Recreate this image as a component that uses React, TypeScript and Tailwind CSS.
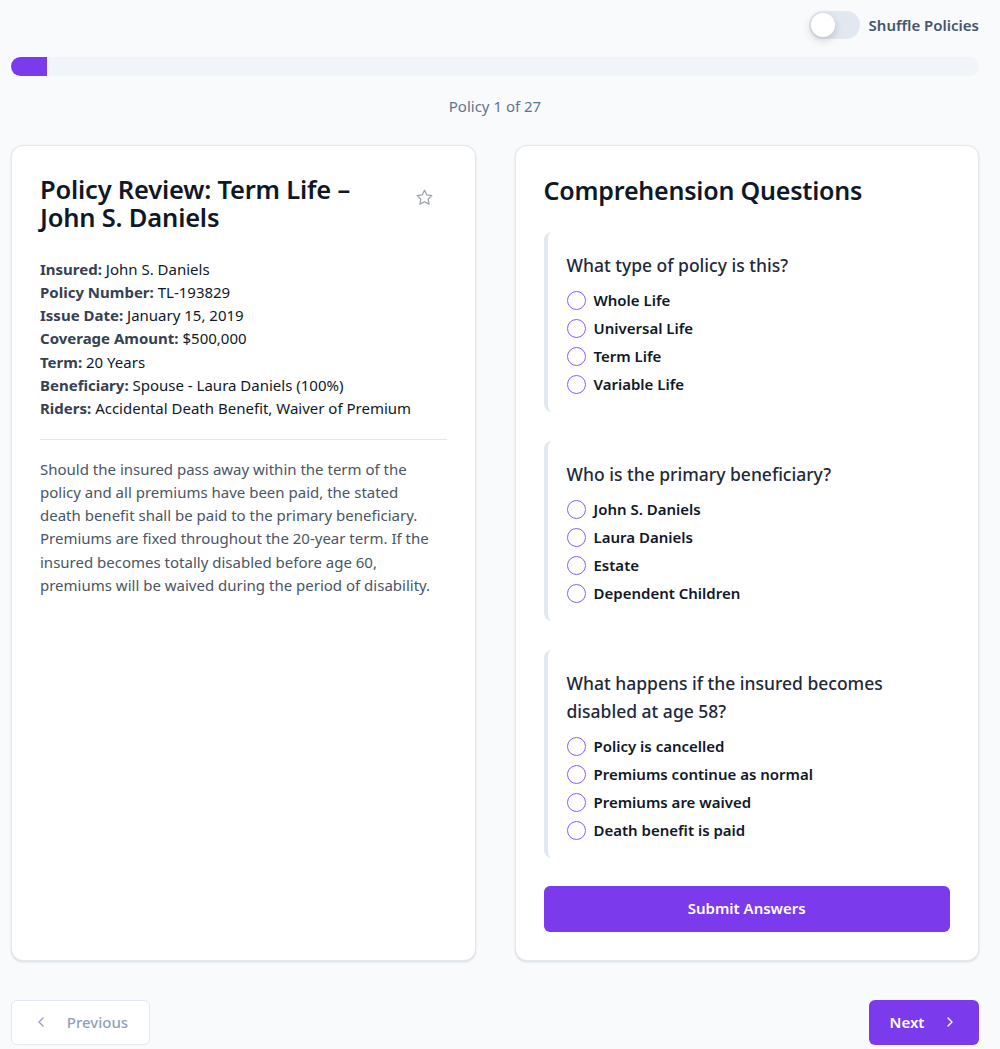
import { useState } from 'react';

const details = [
  ['Insured:', 'John S. Daniels'],
  ['Policy Number:', 'TL-193829'],
  ['Issue Date:', 'January 15, 2019'],
  ['Coverage Amount:', '$500,000'],
  ['Term:', '20 Years'],
  ['Beneficiary:', 'Spouse - Laura Daniels (100%)'],
  ['Riders:', 'Accidental Death Benefit, Waiver of Premium'],
];

const questions = [
  {
    q: 'What type of policy is this?',
    options: ['Whole Life', 'Universal Life', 'Term Life', 'Variable Life'],
  },
  {
    q: 'Who is the primary beneficiary?',
    options: ['John S. Daniels', 'Laura Daniels', 'Estate', 'Dependent Children'],
  },
  {
    q: 'What happens if the insured becomes disabled at age 58?',
    options: ['Policy is cancelled', 'Premiums continue as normal', 'Premiums are waived', 'Death benefit is paid'],
  },
];

function StarIcon() {
  return (
    <svg width="19" height="19" viewBox="0 0 24 24" fill="none" stroke="#9ca3af" strokeWidth="1.6" strokeLinejoin="round">
      <path d="M12 2.8l2.85 5.78 6.38.93-4.62 4.5 1.09 6.35L12 17.36l-5.7 3 1.09-6.35-4.62-4.5 6.38-.93z" />
    </svg>
  );
}

function Chevron({ dir }: { dir: 'left' | 'right' }) {
  return (
    <svg width="16" height="16" viewBox="0 0 24 24" fill="none" stroke="currentColor" strokeWidth="2" strokeLinecap="round" strokeLinejoin="round">
      {dir === 'left' ? <path d="M15 18l-6-6 6-6" /> : <path d="M9 18l6-6-6-6" />}
    </svg>
  );
}

export default function App() {
  const [shuffle, setShuffle] = useState(false);
  const [answers, setAnswers] = useState<Record<number, string>>({});

  return (
    <div className="min-h-screen bg-[#f8fafc] pl-[11px] pr-[21px] pt-[11px] pb-1 text-gray-900 [font-family:'Segoe_UI','Noto_Sans',sans-serif]">
      {/* 상단 토글 */}
      <div className="flex items-center justify-end gap-[9px]">
        <button
          onClick={() => setShuffle(!shuffle)}
          className={`relative h-7 w-[51px] rounded-full ${shuffle ? 'bg-[#7c3aed]' : 'bg-slate-200'}`}
        >
          <span
            className={`absolute top-[2px] h-6 w-6 rounded-full bg-white shadow-[0_3px_8px_rgba(0,0,0,0.18)] ${shuffle ? 'left-[25px]' : 'left-[2px]'}`}
          />
        </button>
        <span className="text-[15px] font-semibold text-slate-600">Shuffle Policies</span>
      </div>

      {/* 진행 바 */}
      <div className="mt-[18px] h-[19px] w-full overflow-hidden rounded-full bg-slate-100">
        <div className="h-full w-[36px] bg-[#7c3aed]" />
      </div>

      <div className="mt-[19px] text-center text-[15px] text-slate-500">Policy 1 of 27</div>

      {/* 카드 영역 */}
      <div className="mt-[27px] flex gap-[39px]">
        <div className="flex-1 rounded-xl border border-slate-200 bg-white px-7 pt-[29px] shadow-sm">
          <div className="flex items-start justify-between">
            <h2 className="w-[320px] text-[25.5px] font-semibold leading-[28px] tracking-[-0.2px] text-gray-900">
              Policy Review: Term Life – John S. Daniels
            </h2>
            <button className="mt-[13px] mr-[13px]">
              <StarIcon />
            </button>
          </div>

          <div className="mt-[27px] text-[15px] leading-[23.3px]">
            {details.map(([label, value]) => (
              <div key={label}>
                <span className="font-bold text-gray-700">{label}</span>{' '}
                <span className="text-gray-900">{value}</span>
              </div>
            ))}
          </div>

          <div className="mt-[18px] border-t border-slate-200" />

          <p className="mt-[18px] max-w-[399px] text-[15px] leading-[23.3px] text-gray-600">
            Should the insured pass away within the term of the policy and all premiums have been paid, the stated
            death benefit shall be paid to the primary beneficiary. Premiums are fixed throughout the 20-year term. If
            the insured becomes totally disabled before age 60, premiums will be waived during the period of
            disability.
          </p>
        </div>

        <div className="flex-1 rounded-xl border border-slate-200 bg-white p-7 shadow-sm">
          <h2 className="text-[25px] font-semibold leading-[32px] tracking-[-0.2px] text-gray-900">
            Comprehension Questions
          </h2>

          <div className="mt-[26px] flex flex-col gap-[29px]">
            {questions.map((item, qi) => (
              <div key={qi} className="rounded-lg border-l-4 border-slate-200 pt-[19px] pb-[13px] pl-[19px] pr-4">
                <div className="text-[17.5px] font-medium leading-[28px] text-gray-800">{item.q}</div>
                <div className="mt-[8px] flex flex-col">
                  {item.options.map((opt) => (
                    <label key={opt} className="flex h-7 cursor-pointer items-center gap-[8px]">
                      <input
                        type="radio"
                        name={`q${qi}`}
                        checked={answers[qi] === opt}
                        onChange={() => setAnswers({ ...answers, [qi]: opt })}
                        className="h-[19px] w-[19px] appearance-none rounded-full border-[1.8px] border-[#8b5cf6] checked:border-[6px] checked:border-[#7c3aed]"
                      />
                      <span className="text-[15px] font-semibold text-gray-900">{opt}</span>
                    </label>
                  ))}
                </div>
              </div>
            ))}
          </div>

          <button className="mt-[28px] h-[46px] w-full rounded-md bg-[#7c3aed] text-[15px] font-semibold text-white">
            Submit Answers
          </button>
        </div>
      </div>

      {/* 하단 버튼 */}
      <div className="mt-[39px] flex items-center justify-between">
        <button className="flex h-[45px] w-[139px] items-center justify-center gap-[18px] rounded-md border border-slate-200 bg-white text-[15px] font-medium text-slate-400">
          <Chevron dir="left" />
          Previous
        </button>
        <button className="flex h-[45px] w-[110px] items-center justify-center gap-[18px] rounded-md bg-[#7c3aed] text-[15px] font-semibold text-white">
          Next
          <Chevron dir="right" />
        </button>
      </div>
    </div>
  );
}
